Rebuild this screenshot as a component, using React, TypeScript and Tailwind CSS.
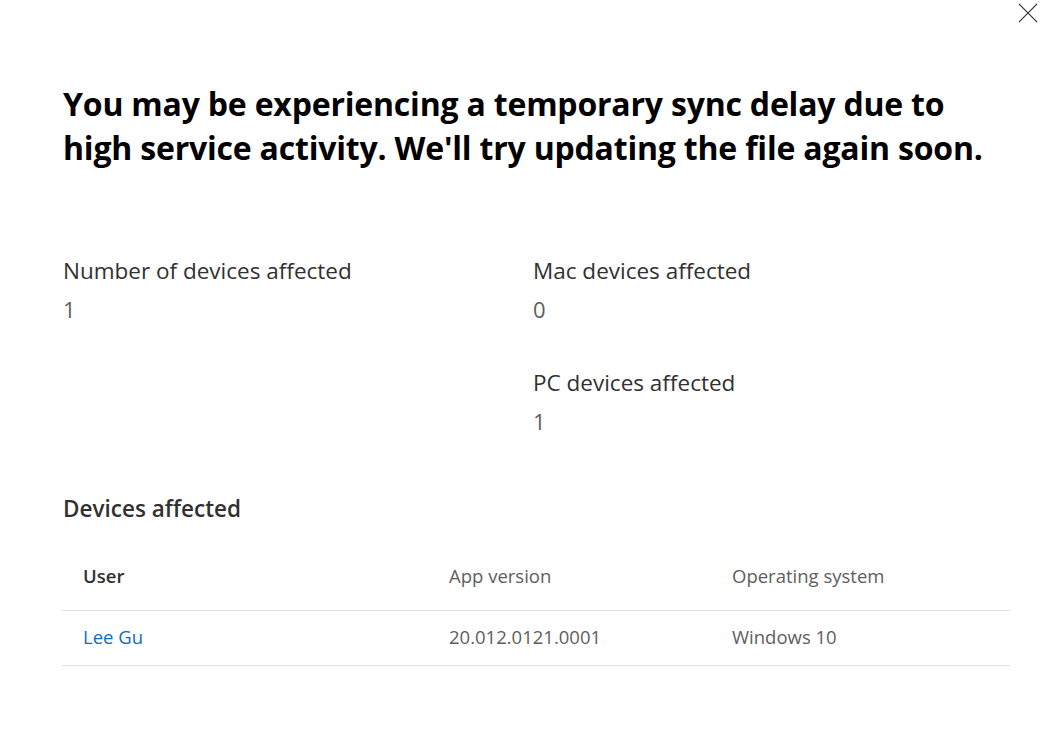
import React from "react";

export default function App() {
  const font = { fontFamily: '"Open Sans", "Noto Sans", sans-serif' };
  return (
    <div className="relative w-[1050px] h-[729px] bg-white text-[#323130]" style={font}>
      <button className="absolute right-[12px] top-[3px] w-[20px] h-[20px] flex items-center justify-center text-[#323130]">
        <svg width="22" height="22" viewBox="0 0 22 22" fill="none" stroke="currentColor" strokeWidth="1.3">
          <path d="M1 1 L21 21 M21 1 L1 21" />
        </svg>
      </button>
      <div className="pl-[63px] pt-[82px] pr-[20px]">
        <h1 className="text-[32px] leading-[44px] font-bold text-black tracking-[-0.2px] whitespace-nowrap">
          You may be experiencing a temporary sync delay due to
          <br />
          high service activity. We'll try updating the file again soon.
        </h1>
        <div className="mt-[87px] flex">
          <div className="w-[470px]">
            <div className="text-[22.5px] leading-[28px]">Number of devices affected</div>
            <div className="mt-[10px] text-[22px] leading-[28px] text-[#605e5c]">1</div>
          </div>
          <div>
            <div className="text-[22.5px] leading-[28px]">Mac devices affected</div>
            <div className="mt-[10px] text-[22px] leading-[28px] text-[#605e5c]">0</div>
            <div className="mt-[46px] text-[22.5px] leading-[28px]">PC devices affected</div>
            <div className="mt-[10px] text-[22px] leading-[28px] text-[#605e5c]">1</div>
          </div>
        </div>
        <div className="mt-[60px] text-[22.5px] leading-[28px] font-semibold">Devices affected</div>
        <div className="mt-[19px] w-[948px] -ml-[1px]">
          <div className="flex h-[69px] items-center border-b border-[#e1dfdd] text-[18.5px]">
            <div className="w-[367px] pl-[21px] font-semibold">User</div>
            <div className="w-[283px] pl-[20px] text-[#605e5c]">App version</div>
            <div className="flex-1 pl-[20px] text-[#605e5c]">Operating system</div>
          </div>
          <div className="flex h-[55px] items-center pb-[3px] border-b border-[#e1dfdd] text-[18.5px]">
            <div className="w-[367px] pl-[21px] text-[#0f6cbd]">Lee Gu</div>
            <div className="w-[283px] pl-[20px] text-[#605e5c]">20.012.0121.0001</div>
            <div className="flex-1 pl-[20px] text-[#605e5c]">Windows 10</div>
          </div>
        </div>
      </div>
    </div>
  );
}
